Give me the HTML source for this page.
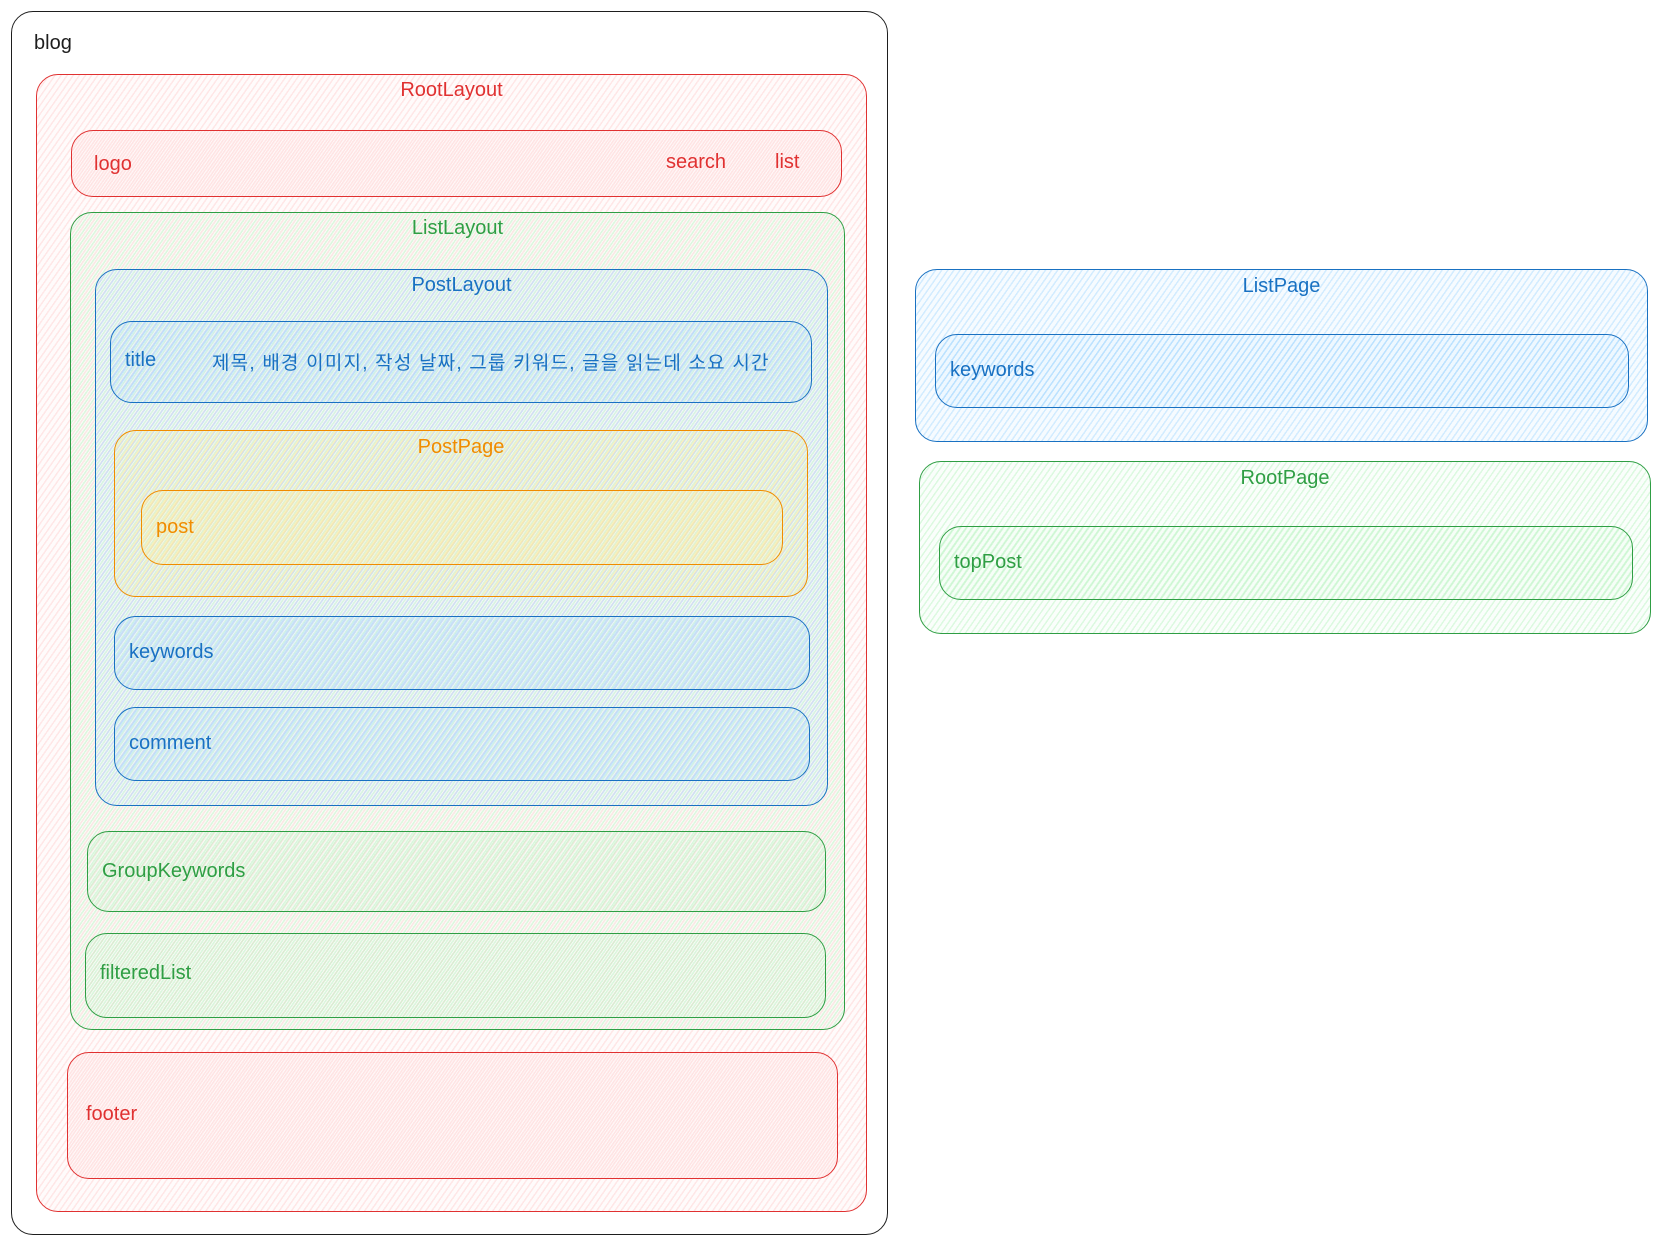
<!DOCTYPE html>
<html><head><meta charset="utf-8"><style>
body{margin:0;width:1662px;height:1243px;background:#fff;position:relative;overflow:hidden;font-family:"Comic Sans MS","Liberation Sans","Noto Sans CJK KR",sans-serif;}
.b{position:absolute;box-sizing:border-box;border-radius:22px;border:1.5px solid}
.t{position:absolute;font-size:20px;white-space:nowrap}
.r{border-color:#e03131;color:#e03131;background:repeating-linear-gradient(-55deg,rgba(255,201,201,.45) 0 1.5px,rgba(255,201,201,.08) 1.5px 5px)}
.g{border-color:#2f9e44;color:#2f9e44;background:repeating-linear-gradient(-55deg,rgba(178,242,187,.45) 0 1.5px,rgba(178,242,187,.06) 1.5px 5px)}
.u{border-color:#1971c2;color:#1971c2;background:repeating-linear-gradient(-55deg,rgba(165,216,255,.5) 0 1.5px,rgba(165,216,255,.1) 1.5px 5px)}
.o{border-color:#f08c00;color:#f08c00;background:repeating-linear-gradient(-55deg,rgba(255,236,153,.55) 0 1.5px,rgba(255,236,153,.12) 1.5px 5px)}
.c{left:0;right:0;text-align:center}
</style></head><body>
<div class="b" style="left:11px;top:11px;width:877px;height:1224px;border-color:#1e1e1e"></div>
<div class="t" style="left:34px;top:32px;color:#1e1e1e">blog</div>
<div class="b r" style="left:36px;top:74px;width:831px;height:1138px"><div class="t c" style="top:4px">RootLayout</div></div>
<div class="b r" style="left:71px;top:130px;width:771px;height:67px"><div class="t" style="left:22px;top:22px">logo</div><div class="t" style="left:594px;top:20px">search</div><div class="t" style="left:703px;top:20px">list</div></div>
<div class="b g" style="left:70px;top:212px;width:775px;height:818px"><div class="t c" style="top:4px">ListLayout</div></div>
<div class="b u" style="left:95px;top:269px;width:733px;height:537px"><div class="t c" style="top:4px">PostLayout</div></div>
<div class="b u" style="left:110px;top:321px;width:702px;height:82px"><div class="t" style="left:14px;top:27px">title</div><div class="t" style="left:101px;top:26px;font-size:19px;letter-spacing:1.2px">제목, 배경 이미지, 작성 날짜, 그룹 키워드, 글을 읽는데 소요 시간</div></div>
<div class="b o" style="left:114px;top:430px;width:694px;height:167px"><div class="t c" style="top:5px">PostPage</div></div>
<div class="b o" style="left:141px;top:490px;width:642px;height:75px"><div class="t" style="left:14px;top:25px">post</div></div>
<div class="b u" style="left:114px;top:616px;width:696px;height:74px"><div class="t" style="left:14px;top:24px">keywords</div></div>
<div class="b u" style="left:114px;top:707px;width:696px;height:74px"><div class="t" style="left:14px;top:24px">comment</div></div>
<div class="b g" style="left:87px;top:831px;width:739px;height:81px"><div class="t" style="left:14px;top:28px">GroupKeywords</div></div>
<div class="b g" style="left:85px;top:933px;width:741px;height:85px"><div class="t" style="left:14px;top:28px">filteredList</div></div>
<div class="b r" style="left:67px;top:1052px;width:771px;height:127px"><div class="t" style="left:18px;top:50px">footer</div></div>
<div class="b u" style="left:915px;top:269px;width:733px;height:173px"><div class="t c" style="top:5px">ListPage</div></div>
<div class="b u" style="left:935px;top:334px;width:694px;height:74px"><div class="t" style="left:14px;top:24px">keywords</div></div>
<div class="b g" style="left:919px;top:461px;width:732px;height:173px"><div class="t c" style="top:5px">RootPage</div></div>
<div class="b g" style="left:939px;top:526px;width:694px;height:74px"><div class="t" style="left:14px;top:24px">topPost</div></div>
</body></html>
